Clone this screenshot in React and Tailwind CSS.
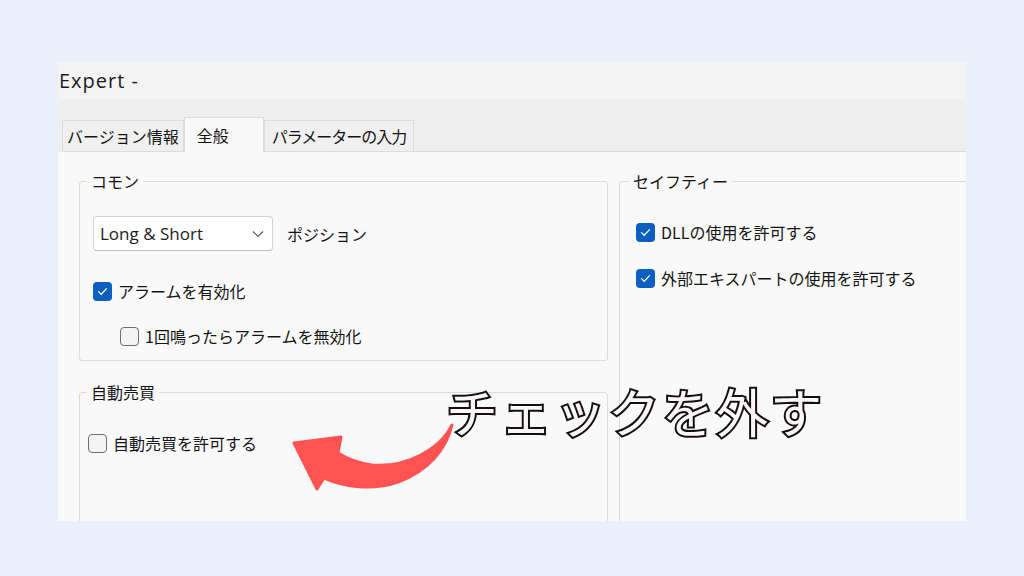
import React from "react";

const jp = { fontFamily: '"Noto Sans CJK JP", "Noto Sans", sans-serif' };

function Check({ on }) {
  if (on) {
    return (
      <span className="flex h-[19px] w-[19px] shrink-0 items-center justify-center rounded-[4px] bg-[#0b5fc1]">
        <svg width="11" height="9" viewBox="0 0 11 9" fill="none">
          <path d="M1.5 4.6 L4.2 7.2 L9.5 1.6" stroke="#ffffff" strokeWidth="1.3" strokeLinecap="round" strokeLinejoin="round" />
        </svg>
      </span>
    );
  }
  return <span className="h-[19px] w-[19px] shrink-0 rounded-[4px] border border-[#6f6f6f] bg-[#f4f4f4]" />;
}

function Row({ on, label, className }) {
  return (
    <div className={"flex items-center gap-[6px] " + (className || "")}>
      <Check on={on} />
      <span className="text-[16px] leading-[22px] text-[#141414]">{label}</span>
    </div>
  );
}

function Group({ title, className, legendClass, children }) {
  return (
    <fieldset className={"rounded-[3px] border border-[#dcdcdc] " + (className || "")}>
      <legend className={"px-[4px] text-[16px] leading-[22px] text-[#141414] " + (legendClass || "")}>{title}</legend>
      {children}
    </fieldset>
  );
}

export default function App() {
  return (
    <div className="relative h-[576px] w-[1024px] overflow-hidden bg-[#e9f0fc] pl-[58px] pt-[62px]" style={jp}>
      <div className="flex h-[459px] w-[908px] flex-col overflow-hidden bg-[#f9f9f9]">
        <div className="flex h-[37px] shrink-0 items-center bg-[#f3f3f3] pl-[1px] text-[20px] tracking-[1px] text-[#1c1c1c]" style={{ fontFamily: '"Open Sans", "Noto Sans", sans-serif' }}>
          Expert -
        </div>

        <div className="flex h-[53px] shrink-0 items-end bg-[#eeeeee] pl-[4px]">
          <div className="flex h-[32px] items-center border border-[#dcdcdc] bg-[#f0f0f0] px-[4px] text-[16px] text-[#141414]">
            バージョン情報
          </div>
          <div className="flex h-[35px] items-center border-x border-t border-[#dcdcdc] bg-[#f9f9f9] pl-[12px] pr-[34px] text-[16px] text-[#141414]">
            全般
          </div>
          <div className="flex h-[32px] items-center border border-[#dcdcdc] bg-[#f0f0f0] px-[7px] text-[16px] tracking-[-1px] text-[#141414]">
            パラメーターの入力
          </div>
          <div className="h-[32px] flex-1 border-b border-[#dcdcdc]" />
        </div>

        <div className="flex min-h-0 flex-1 gap-[11px] pl-[21px] pt-[18px]">
          <div className="flex w-[529px] shrink-0 flex-col">
            <Group title="コモン" className="h-[191px] shrink-0 pl-[13px]" legendClass="-ml-[6px]">
              <div className="mt-[24px] flex items-center">
                <div className="flex h-[35px] w-[180px] items-center justify-between rounded-[4px] border border-[#d4d4d4] border-b-[#bdbdbd] bg-white pl-[6px] pr-[8px]">
                  <span className="text-[17px] text-[#1c1c1c]" style={{ fontFamily: '"Open Sans", "Noto Sans", sans-serif' }}>
                    Long &amp; Short
                  </span>
                  <svg width="12" height="8" viewBox="0 0 12 8" fill="none">
                    <path d="M1 1.5 L6 6.5 L11 1.5" stroke="#555" strokeWidth="1.1" />
                  </svg>
                </div>
                <span className="ml-[14px] text-[16px] text-[#141414]">ポジション</span>
              </div>
              <Row on label="アラームを有効化" className="mt-[29px]" />
              <Row label="1回鳴ったらアラームを無効化" className="ml-[27px] mt-[23px]" />
            </Group>

            <Group title="自動売買" className="mt-[20px] h-[300px] shrink-0 pl-[8px]" legendClass="-ml-[1px]">
              <Row label="自動売買を許可する" className="mt-[29px]" />
            </Group>
          </div>

          <Group title="セイフティー" className="h-[400px] w-[420px] shrink-0 pl-[16px]" legendClass="-ml-[7px]">
            <Row on label="DLLの使用を許可する" className="mt-[29px]" />
            <Row on label="外部エキスパートの使用を許可する" className="mt-[24px]" />
          </Group>
        </div>
      </div>

      <svg className="pointer-events-none absolute left-0 top-0" width="1024" height="576" viewBox="0 0 1024 576">
        <path
          d="M452 425 C440 450 405 468 372 465 C357 463 346 458 338 453 L341 437 L294 443 L317 489 L324 478 C345 487 372 491 398 482 C428 471 446 450 452 425 Z"
          fill="#ff5252"
          stroke="#ff5252"
          strokeWidth="3"
          strokeLinejoin="round"
        />
      </svg>

      <div className="pointer-events-none absolute left-[446px] top-[385px] whitespace-nowrap text-[52px] leading-none tracking-[2px] text-[#fdf6f6] [-webkit-text-stroke:4px_#111111] [paint-order:stroke_fill]">
        チェックを外す
      </div>
    </div>
  );
}
